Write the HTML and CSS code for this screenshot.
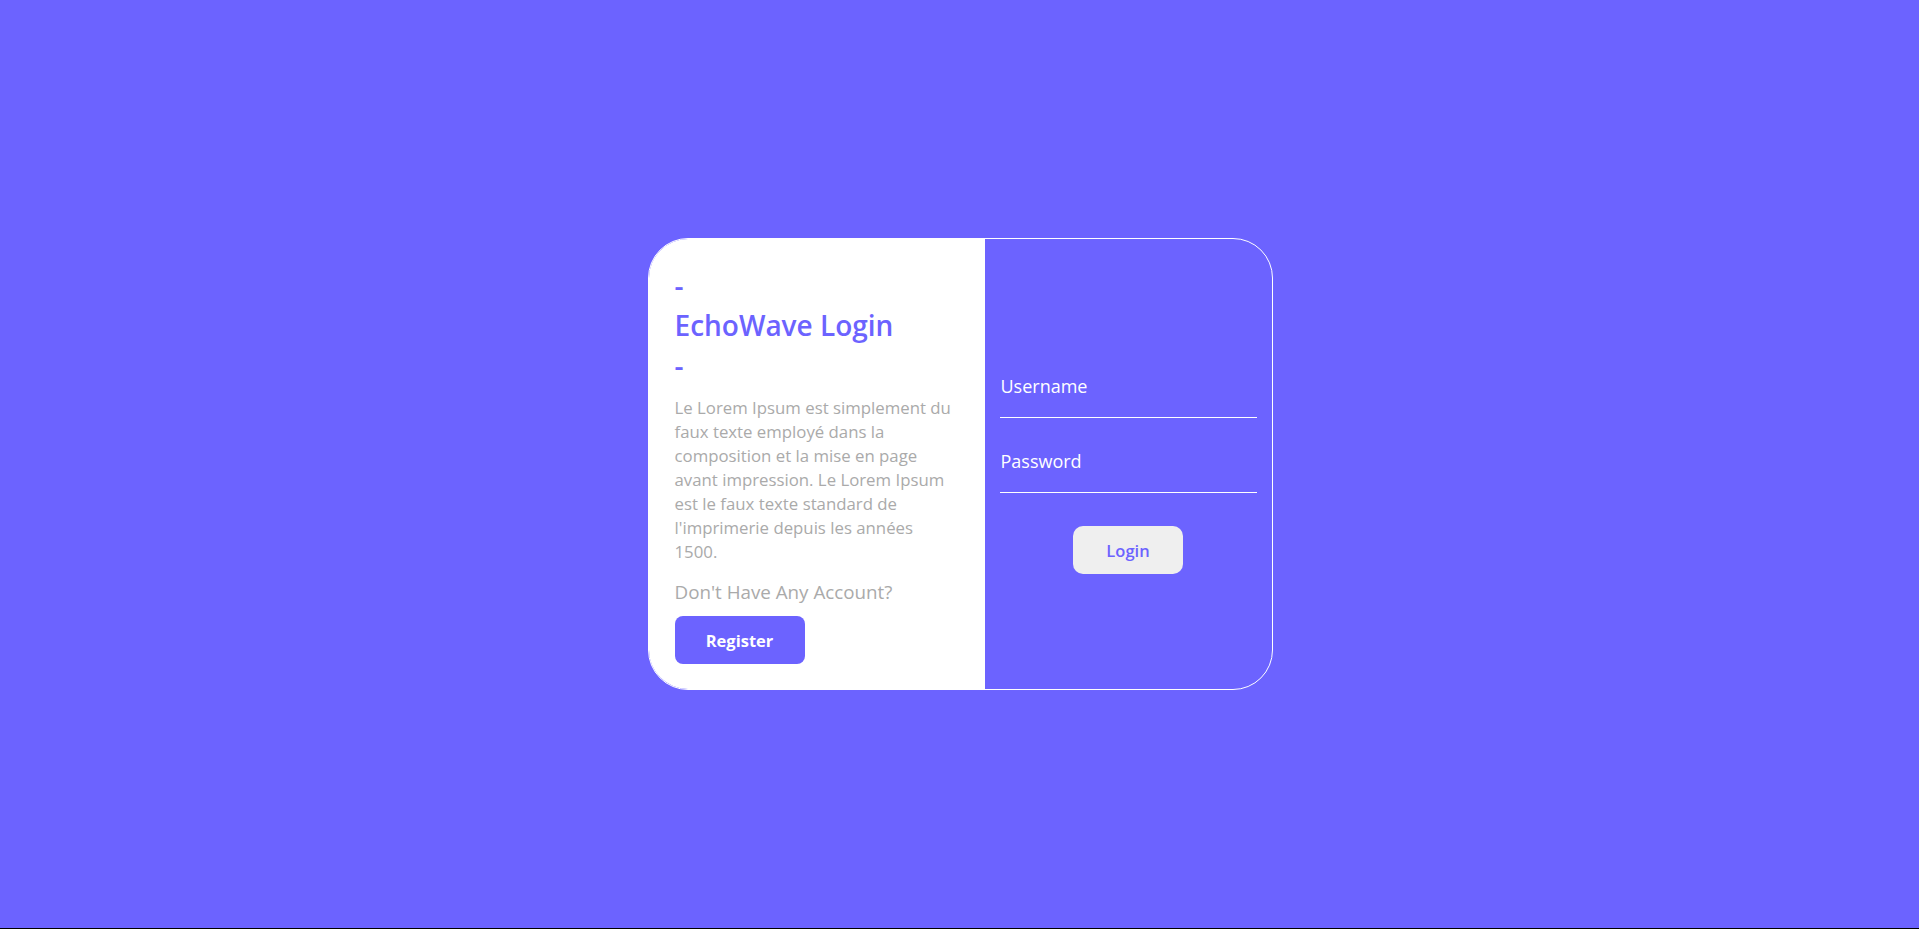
FILE: index.html
```html
<!DOCTYPE html>
<html lang="fr">
<head>
<meta charset="utf-8">
<title>EchoWave Login</title>
<link rel="stylesheet" href="styles.css">
</head>
<body>
<main class="page">
  <div class="card">
    <section class="intro">
      <h1 class="title">-<br>EchoWave Login<br>-</h1>
      <p class="desc">Le Lorem Ipsum est simplement du faux texte employé dans la composition et la mise en page avant impression. Le Lorem Ipsum est le faux texte standard de l'imprimerie depuis les années 1500.</p>
      <p class="ask">Don't Have Any Account?</p>
      <button class="register" type="button">Register</button>
    </section>
    <form class="login-form">
      <input class="field" type="text" placeholder="Username">
      <input class="field field-second" type="password" placeholder="Password">
      <button class="login" type="button">Login</button>
    </form>
  </div>
</main>
</body>
</html>
```
FILE: styles.css
```css
html {
  background: #000;
}
body {
  margin: 0;
  font-family: "Open Sans", "Noto Sans", sans-serif;
}
.page {
  height: 928px;
  background: #6c63ff;
  display: flex;
  align-items: center;
  justify-content: center;
}
.card {
  width: 623px;
  display: flex;
  border: 1px solid #fff;
  border-radius: 40px;
  overflow: hidden;
  margin-left: 1px;
}
.intro {
  width: 336px;
  box-sizing: border-box;
  background: #fff;
  padding: 26px 30px 25px 26px;
}
.title {
  margin: 0;
  color: #6c63ff;
  font-size: 28px;
  font-weight: 600;
  line-height: 40px;
}
.desc {
  margin: 11px 0 0;
  color: #aaaaaa;
  font-size: 16.8px;
  line-height: 24px;
}
.ask {
  margin: 15px 0 0;
  color: #aaaaaa;
  font-size: 18.8px;
  line-height: 27px;
}
.register {
  margin-top: 10px;
  width: 130px;
  height: 48px;
  border: none;
  border-radius: 8px;
  background: #6c63ff;
  color: #fff;
  font-family: inherit;
  font-size: 16.5px;
  font-weight: 700;
  cursor: pointer;
}
.login-form {
  flex: 1;
  display: flex;
  flex-direction: column;
  justify-content: center;
  align-items: center;
  padding: 0 15px;
}
.field {
  width: 100%;
  box-sizing: border-box;
  background: transparent;
  border: none;
  border-bottom: 1px solid #fff;
  padding: 20px 1px;
  height: 64px;
  color: #fff;
  font-family: inherit;
  font-size: 18px;
  outline: none;
}
.field::placeholder {
  color: #fff;
  opacity: 1;
}
.field-second {
  margin-top: 11px;
}
.login {
  margin-top: 33px;
  width: 110px;
  height: 48px;
  border: none;
  border-radius: 10px;
  background: #efefef;
  color: #6c63ff;
  font-family: inherit;
  font-size: 16.5px;
  font-weight: 600;
  cursor: pointer;
}
```
